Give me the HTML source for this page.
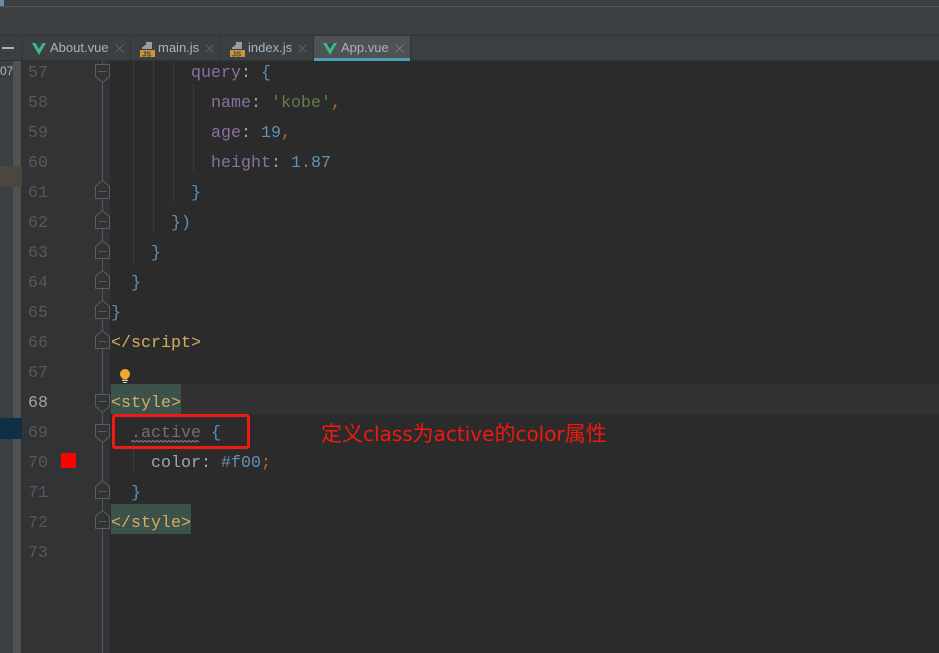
<!DOCTYPE html>
<html><head><meta charset="utf-8">
<style>
html,body{margin:0;padding:0;width:939px;height:653px;overflow:hidden;background:#2b2b2b}
.a{position:absolute}
.ln{position:absolute;left:28px;width:24px;font:16.67px/30px "Liberation Mono",monospace;color:#56585a;white-space:pre}
.c{position:absolute;font:16.67px/30px "Liberation Mono",monospace;white-space:pre;color:#9aa7b4}
.p{color:#8a70a0}.b{color:#6390b0}.s{color:#627d52}.o{color:#b86c2e}.t{color:#d4ae62}.br{color:#5a90ba}.g{color:#707070}
.tab{position:absolute;top:36px;height:24px;font:13px/24px "Liberation Sans",sans-serif;color:#a9b3bb;white-space:pre}
.guide{position:absolute;width:1px;background:#3b3b3b}
.z{font-size:21px}
</style></head><body>
<div class="a" style="left:0;top:0;width:939px;height:61px;background:#3c3f41"></div>
<div class="a" style="left:0;top:6px;width:939px;height:1px;background:#555759"></div>
<div class="a" style="left:0;top:0;width:4px;height:6px;background:#6d8ca0"></div>
<div class="a" style="left:0;top:35px;width:939px;height:1px;background:#323436"></div>
<div class="a" style="left:0;top:60px;width:939px;height:1px;background:#323232"></div>
<div class="a" style="left:2px;top:47px;width:12px;height:2px;background:#afb1b3"></div>

<!-- left strip -->
<div class="a" style="left:0;top:61px;width:13px;height:592px;background:#3c3f41"></div>
<div class="a" style="left:13px;top:61px;width:8px;height:592px;background:#4f5152"></div>
<div class="a" style="left:21px;top:61px;width:1px;height:592px;background:#2d2f30"></div>
<div class="a" style="left:0;top:166px;width:22px;height:21px;background:#4b473e"></div>
<div class="a" style="left:0;top:418px;width:22px;height:21px;background:#0f2f47"></div>
<div class="a" style="left:0;top:64px;font:12px/14px 'Liberation Sans',sans-serif;color:#a9b7c6;width:10px;text-align:right">07</div>

<!-- gutter -->
<div class="a" style="left:22px;top:61px;width:88px;height:592px;background:#313335"></div>
<div class="a" style="left:102px;top:61px;width:1px;height:592px;background:#55585a"></div>
<div class="a" style="left:110px;top:384px;width:829px;height:30px;background:#323232"></div>
<div class="a" style="left:111px;top:384px;width:70px;height:30px;background:#3c5149"></div>
<div class="a" style="left:111px;top:504px;width:80px;height:30px;background:#3c5149"></div>

<!-- guides -->
<div class="guide" style="left:133px;top:61px;height:202px"></div>
<div class="guide" style="left:153px;top:61px;height:172px"></div>
<div class="guide" style="left:173px;top:61px;height:142px"></div>
<div class="guide" style="left:193px;top:84px;height:89px"></div>
<div class="guide" style="left:133px;top:443px;height:30px"></div>

<!-- line numbers -->
<div class="ln" style="top:59px">57</div>
<div class="ln" style="top:89px">58</div>
<div class="ln" style="top:119px">59</div>
<div class="ln" style="top:149px">60</div>
<div class="ln" style="top:179px">61</div>
<div class="ln" style="top:209px">62</div>
<div class="ln" style="top:239px">63</div>
<div class="ln" style="top:269px">64</div>
<div class="ln" style="top:299px">65</div>
<div class="ln" style="top:329px">66</div>
<div class="ln" style="top:359px">67</div>
<div class="ln" style="top:389px;color:#a4a3a3">68</div>
<div class="ln" style="top:419px">69</div>
<div class="ln" style="top:449px">70</div>
<div class="ln" style="top:479px">71</div>
<div class="ln" style="top:509px">72</div>
<div class="ln" style="top:539px">73</div>

<!-- fold markers -->
<svg class="a" style="left:90px;top:54px" width="24" height="500" fill="#313335" stroke="#5a5c5e" stroke-width="1">
<g><path d="M5.500 10.500H19.500V22.500L12.500 28.500L5.500 22.500Z"/><path d="M8.500 17.500H16.500"/></g>
<g transform="translate(0,330)"><path d="M5.500 10.500H19.500V22.500L12.500 28.500L5.500 22.500Z"/><path d="M8.500 17.500H16.500"/></g>
<g transform="translate(0,360)"><path d="M5.500 10.500H19.500V22.500L12.500 28.500L5.500 22.500Z"/><path d="M8.500 17.500H16.500"/></g>
<g transform="translate(0,120)"><path d="M5.500 12.500L12.500 6.500L19.500 12.500V24.500H5.500Z"/><path d="M8.500 17.500H16.500"/></g>
<g transform="translate(0,150)"><path d="M5.500 12.500L12.500 6.500L19.500 12.500V24.500H5.500Z"/><path d="M8.500 17.500H16.500"/></g>
<g transform="translate(0,180)"><path d="M5.500 12.500L12.500 6.500L19.500 12.500V24.500H5.500Z"/><path d="M8.500 17.500H16.500"/></g>
<g transform="translate(0,210)"><path d="M5.500 12.500L12.500 6.500L19.500 12.500V24.500H5.500Z"/><path d="M8.500 17.500H16.500"/></g>
<g transform="translate(0,240)"><path d="M5.500 12.500L12.500 6.500L19.500 12.500V24.500H5.500Z"/><path d="M8.500 17.500H16.500"/></g>
<g transform="translate(0,270)"><path d="M5.500 12.500L12.500 6.500L19.500 12.500V24.500H5.500Z"/><path d="M8.500 17.500H16.500"/></g>
<g transform="translate(0,420)"><path d="M5.500 12.500L12.500 6.500L19.500 12.500V24.500H5.500Z"/><path d="M8.500 17.500H16.500"/></g>
<g transform="translate(0,450)"><path d="M5.500 12.500L12.500 6.500L19.500 12.500V24.500H5.500Z"/><path d="M8.500 17.500H16.500"/></g>
</svg>

<!-- code -->
<div class="c" style="left:191px;top:59px"><span class="p">query</span>: <span class="br">{</span></div>
<div class="c" style="left:211px;top:89px"><span class="p">name</span>: <span class="s">'kobe'</span><span class="o">,</span></div>
<div class="c" style="left:211px;top:119px"><span class="p">age</span>: <span class="b">19</span><span class="o">,</span></div>
<div class="c" style="left:211px;top:149px"><span class="p">height</span>: <span class="b">1.87</span></div>
<div class="c br" style="left:191px;top:179px">}</div>
<div class="c br" style="left:171px;top:209px">})</div>
<div class="c br" style="left:151px;top:239px">}</div>
<div class="c br" style="left:131px;top:269px">}</div>
<div class="c br" style="left:111px;top:299px">}</div>
<div class="c t" style="left:111px;top:329px">&lt;/script&gt;</div>
<div class="c t" style="left:111px;top:389px">&lt;style&gt;</div>
<div class="c" style="left:131px;top:419px"><span class="g">.active</span> <span class="br">{</span></div>
<div class="c" style="left:151px;top:449px">color: <span class="b">#f00</span><span class="o">;</span></div>
<div class="c br" style="left:131px;top:479px">}</div>
<div class="c t" style="left:111px;top:509px">&lt;/style&gt;</div>

<!-- squiggle -->
<svg class="a" style="left:131px;top:440px" width="70" height="4"><path d="M0 2l2-1.500 2 1.500 2-1.500 2 1.500 2-1.500 2 1.500 2-1.500 2 1.500 2-1.500 2 1.500 2-1.500 2 1.500 2-1.500 2 1.500 2-1.500 2 1.500 2-1.500 2 1.500 2-1.500 2 1.500 2-1.500 2 1.500 2-1.500 2 1.500 2-1.500 2 1.500 2-1.500 2 1.500 2-1.500 2 1.500 2-1.500 2 1.500 2-1.500 2 1.500" fill="none" stroke="#8a8a7a" stroke-width="1"/></svg>

<!-- bulb -->
<svg class="a" style="left:118px;top:369px" width="14" height="16"><circle cx="7" cy="5" r="5" fill="#f0a732"/><rect x="4.500" y="7" width="5" height="3.500" fill="#f0a732"/><rect x="4" y="11" width="6" height="1" fill="#c8c8c8"/><rect x="5" y="13" width="4" height="1" fill="#c8c8c8"/></svg>

<!-- red square -->
<div class="a" style="left:61px;top:453px;width:15px;height:15px;background:#ff0000"></div>

<!-- annotation -->
<div class="a" style="left:112px;top:414px;width:132px;height:29px;border:3px solid #f01a14;border-radius:3px"></div>
<div class="a" style="left:321px;top:421px;font:20px/26px 'DejaVu Sans','Noto Sans CJK SC',sans-serif;color:#f0190f;white-space:pre"><span class="z">定义</span>class<span class="z">为</span>active<span class="z">的</span>color<span class="z">属性</span></div>

<!-- tabs -->
<div class="a" style="left:22px;top:36px;width:1px;height:24px;background:#323436"></div>
<div class="a" style="left:130px;top:36px;width:1px;height:24px;background:#323436"></div>
<div class="a" style="left:220px;top:36px;width:1px;height:24px;background:#323436"></div>
<div class="a" style="left:313px;top:36px;width:1px;height:24px;background:#323436"></div>
<div class="a" style="left:314px;top:36px;width:96px;height:22px;background:#4e5254"></div>
<div class="a" style="left:314px;top:58px;width:96px;height:3px;background:#4a9fb5"></div>
<div class="a" style="left:410px;top:36px;width:1px;height:24px;background:#323436"></div>

<div class="tab" style="left:50px">About.vue</div>
<div class="tab" style="left:158px">main.js</div>
<div class="tab" style="left:248px">index.js</div>
<div class="tab" style="left:341px">App.vue</div>

<svg class="a" style="left:32px;top:43px" width="14" height="12"><path d="M0 0H3.500L7 6L10.500 0H14L7 12Z" fill="#41b883"/><path d="M3.500 0H6L7 2L8 0H10.500L7 6Z" fill="#34495e"/></svg>
<svg class="a" style="left:323px;top:43px" width="14" height="12"><path d="M0 0H3.500L7 6L10.500 0H14L7 12Z" fill="#41b883"/><path d="M3.500 0H6L7 2L8 0H10.500L7 6Z" fill="#34495e"/></svg>

<svg class="a" style="left:140px;top:42px" width="16" height="15"><path d="M2 7V5.500L6 2.500V0H12V7Z" fill="#9a9c9e"/><rect x="0" y="8" width="15" height="7" fill="#c5963a"/><text x="2" y="14.500" font-family="Liberation Sans" font-size="7.500" font-weight="bold" fill="#3c3f41">JS</text></svg>
<svg class="a" style="left:230px;top:42px" width="16" height="15"><path d="M2 7V5.500L6 2.500V0H12V7Z" fill="#9a9c9e"/><rect x="0" y="8" width="15" height="7" fill="#c5963a"/><text x="2" y="14.500" font-family="Liberation Sans" font-size="7.500" font-weight="bold" fill="#3c3f41">JS</text></svg>

<svg class="a" style="left:0;top:0" width="420" height="60" stroke="#5c6064" stroke-width="1" fill="none">
<path d="M115.500 44.500l8 8M123.500 44.500l-8 8"/>
<path d="M205.500 44.500l8 8M213.500 44.500l-8 8"/>
<path d="M298.500 44.500l8 8M306.500 44.500l-8 8"/>
<path d="M395.500 44.500l8 8M403.500 44.500l-8 8" stroke="#737779"/>
</svg>
</body></html>
